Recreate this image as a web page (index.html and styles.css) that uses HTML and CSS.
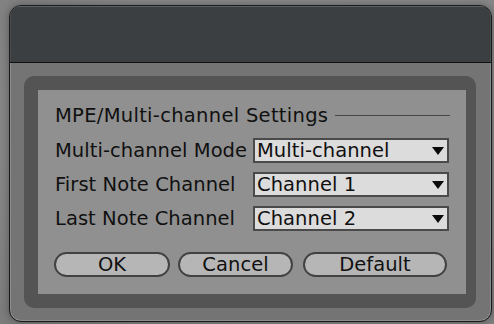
FILE: index.html
```html
<!DOCTYPE html>
<html>
<head>
<meta charset="utf-8">
<link rel="stylesheet" href="styles.css">
</head>
<body>
<div class="window">
  <div class="titlebar"></div>
  <div class="content">
    <div class="frame">
      <div class="panel">
        <div class="group-head">
          <span class="group-title">MPE/Multi-channel Settings</span>
          <span class="group-line"></span>
        </div>
        <div class="row">
          <span class="label">Multi-channel Mode</span>
          <div class="select"><span class="value">Multi-channel</span><span class="arrow"></span></div>
        </div>
        <div class="row">
          <span class="label">First Note Channel</span>
          <div class="select"><span class="value">Channel 1</span><span class="arrow"></span></div>
        </div>
        <div class="row">
          <span class="label">Last Note Channel</span>
          <div class="select"><span class="value">Channel 2</span><span class="arrow"></span></div>
        </div>
        <div class="buttons">
          <div class="btn btn-ok">OK</div>
          <div class="btn btn-cancel">Cancel</div>
          <div class="btn btn-default">Default</div>
        </div>
      </div>
    </div>
  </div>
</div>
</body>
</html>
```

FILE: styles.css
```css
html, body {
  margin: 0;
  padding: 0;
}
body {
  width: 494px;
  height: 324px;
  overflow: hidden;
  background: radial-gradient(ellipse at 60% 40%, #8e8e8e 0%, #8a8a8a 60%, #7c7c7c 100%);
  font-family: "DejaVu Sans", sans-serif;
  font-size: 19.5px;
  letter-spacing: 0.05px;
  color: #101010;
  padding: 5px 0 0 9px;
  box-sizing: border-box;
}
.window {
  width: 483px;
  height: 317px;
  box-sizing: border-box;
  border: 1px solid #1a1a1a;
  border-radius: 12px;
  overflow: hidden;
  display: flex;
  flex-direction: column;
  background: #747474;
  box-shadow: 0 0 10px rgba(0,0,0,0.35), inset 0 0 0 1px #8c8c8c;
}
.titlebar {
  height: 56px;
  flex: none;
  background: #3b3f42;
  border-bottom: 1px solid #111;
  box-shadow: inset 0 1px 0 #5d6164, inset 1px 0 0 #4a4e51, inset -1px 0 0 #4a4e51;
}
.content {
  flex: 1;
  padding: 13px 15px 13px 14px;
  display: flex;
  flex-direction: column;
}
.frame {
  flex: 1;
  background: #545454;
  border-radius: 10px;
  padding: 14px 10px 14px 14px;
  display: flex;
  flex-direction: column;
}
.panel {
  flex: 1;
  background: #909090;
  padding: 14px 17px 0 17px;
  display: flex;
  flex-direction: column;
}
.group-head {
  display: flex;
  align-items: center;
  height: 22px;
  margin-bottom: 12px;
}
.group-title {
  white-space: nowrap;
  letter-spacing: 0.3px;
}
.group-line {
  flex: 1;
  height: 1px;
  background: #464646;
  margin-left: 7px;
  margin-right: -1px;
}
.row {
  display: flex;
  align-items: center;
  height: 25px;
  margin-bottom: 9px;
}
.label {
  white-space: nowrap;
}
.select {
  margin-left: auto;
  width: 196px;
  height: 25px;
  box-sizing: border-box;
  border: 2px solid #4a4a4a;
  background: #dcdcdc;
  display: flex;
  align-items: center;
  padding: 0 3px 0 2px;
}
.value {
  flex: 1;
  white-space: nowrap;
}
.arrow {
  width: 0;
  height: 0;
  border-left: 6px solid transparent;
  border-right: 6px solid transparent;
  border-top: 8px solid #0a0a0a;
}
.buttons {
  display: flex;
  margin-top: 12px;
  margin-left: -1px;
}
.btn {
  height: 25px;
  box-sizing: border-box;
  border: 2px solid #424242;
  border-radius: 13px;
  background: #b6b6b6;
  display: flex;
  align-items: center;
  justify-content: center;
}
.btn-ok { width: 116px; }
.btn-cancel { width: 115px; margin-left: 8px; }
.btn-default { width: 144px; margin-left: 10px; }
```
